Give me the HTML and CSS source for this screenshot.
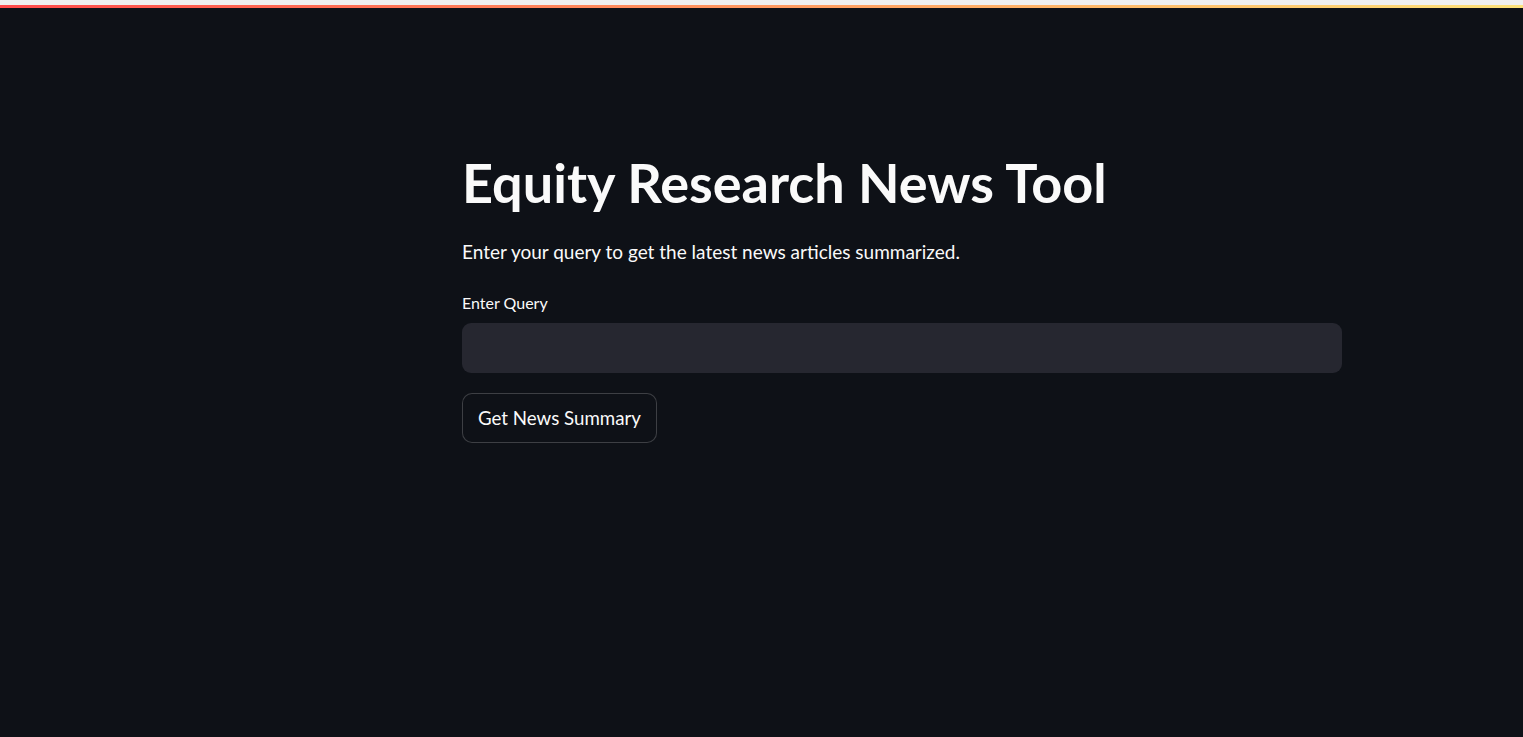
FILE: index.html
```html
<!DOCTYPE html>
<html>
<head>
<meta charset="utf-8">
<link rel="stylesheet" href="styles.css">
</head>
<body>
<div class="chrome-strip"></div>
<div class="decoration"></div>
<main class="app">
  <div class="block">
    <h1 class="title">Equity Research News Tool</h1>
    <p class="lead">Enter your query to get the latest news articles summarized.</p>
    <div class="field">
      <label class="field-label" for="q">Enter Query</label>
      <div class="input-wrap"><input id="q" class="input" type="text"></div>
    </div>
    <div class="actions">
      <button class="btn">Get News Summary</button>
    </div>
  </div>
</main>
</body>
</html>
```
FILE: styles.css
```css
html, body {
  margin: 0;
  padding: 0;
  height: 100%;
  background: #0e1117;
}
body {
  font-family: "Lato", "Noto Sans", sans-serif;
  color: #fafafa;
  overflow: hidden;
}
.chrome-strip {
  height: 5px;
  background: #f0f0f0;
}
.decoration {
  height: 3px;
  background: linear-gradient(90deg, #ff4b4b 0%, #ff8a5c 40%, #ffbd6b 75%, #fde27a 100%);
}
.app {
  display: flex;
  padding-left: 462px;
  padding-top: 143px;
}
.block {
  width: 880px;
  display: flex;
  flex-direction: column;
}
.title {
  margin: 0;
  font-size: 54px;
  font-weight: 700;
  line-height: 64px;
  letter-spacing: 0;
}
.lead {
  margin: 22px 0 0 0;
  font-size: 19px;
  line-height: 30px;
}
.field {
  margin-top: 26px;
  display: flex;
  flex-direction: column;
}
.field-label {
  font-size: 16px;
  line-height: 20px;
  margin-bottom: 10px;
}
.input-wrap {
  height: 50px;
  background: #262730;
  border-radius: 9px;
  display: flex;
}
.input {
  flex: 1;
  background: transparent;
  border: 0;
  outline: none;
  color: #fafafa;
  font: inherit;
  padding: 0 16px;
}
.actions {
  margin-top: 20px;
  display: flex;
}
.btn {
  height: 50px;
  padding: 0 15px;
  background: #0e1117;
  color: #fafafa;
  border: 1px solid rgba(250, 250, 250, 0.2);
  border-radius: 10px;
  font-family: "Lato", "Noto Sans", sans-serif;
  font-size: 18.7px;
}
```
